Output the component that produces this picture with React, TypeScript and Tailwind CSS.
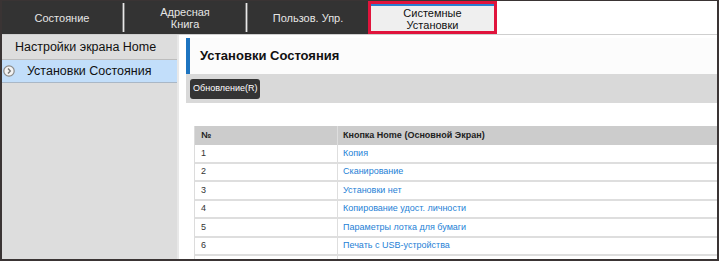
const rows = [
  { n: "1", label: "Копия" },
  { n: "2", label: "Сканирование" },
  { n: "3", label: "Установки нет" },
  { n: "4", label: "Копирование удост. личности" },
  { n: "5", label: "Параметры лотка для бумаги" },
  { n: "6", label: "Печать с USB-устройства" },
  { n: "", label: "" },
];

function Tab({ label }: { label: string }) {
  return (
    <div className="flex w-[120px] items-center justify-center whitespace-pre text-center text-[11px] leading-[12px] text-[#e6e6e6]">
      {label}
    </div>
  );
}

function Sep() {
  return <div className="my-[2px] w-[3px] border-x border-[#777] bg-[#e8e8e8]" />;
}

export default function App() {
  return (
    <div className="flex h-[261px] w-[719px] flex-col overflow-hidden border-x-2 border-b-2 border-t border-[#3a3434] bg-white font-['Liberation_Sans',Arial,sans-serif]">
      {/* Tabs */}
      <div className="flex h-[34px] shrink-0 border-b border-[#cfcfcf]">
        <div className="flex bg-[#333333]">
          <Tab label="Состояние" />
          <Sep />
          <Tab label={"Адресная\nКнига"} />
          <Sep />
          <Tab label="Пользов. Упр." />
        </div>
        <div className="flex w-[129px] flex-col border-[3px] border-[#e0143c] bg-[#efefef]">
          <div className="h-[2px] bg-[#2a7fd0]" />
          <div className="flex flex-1 items-center justify-center text-center text-[11px] leading-[12px] text-[#111]">
            Системные
            <br />
            Установки
          </div>
        </div>
        <div className="flex-1" />
      </div>

      <div className="flex min-h-0 flex-1">
        {/* Sidebar */}
        <div className="w-[177px] shrink-0 border-r-2 border-[#e8e8e8] bg-[#dddddd]">
          <div className="flex h-[25px] items-center border-b border-[#bdbdbd] pl-[13px] text-[12.5px] text-[#111]">
            Настройки экрана Home
          </div>
          <div className="flex h-[23px] items-center border-b border-[#a9b7c6] bg-[#c2defa] text-[12.5px] text-[#111]">
            <svg width="12" height="12" viewBox="0 0 12 12" className="ml-[1px] mr-[12px]">
              <circle cx="6" cy="6" r="5.2" fill="#f4f4f4" stroke="#8a8a8a" strokeWidth="1.2" />
              <path d="M5 3.6 L7.3 6 L5 8.4" fill="none" stroke="#777" strokeWidth="1.4" />
            </svg>
            Установки Состояния
          </div>
        </div>

        {/* Main */}
        <div className="flex min-w-0 flex-1 flex-col pl-[7px]">
          <div className="mt-[3px] flex h-[36px] shrink-0 items-center border-l-4 border-[#1d74c0] bg-[#fcfcfc] pl-[10px] text-[13px] font-bold text-[#111]">
            Установки Состояния
          </div>
          <div className="flex h-[29px] shrink-0 items-center bg-[#d9d9d9] pl-[4px]">
            <div className="flex h-[20px] items-center rounded-[3px] bg-[#343434] px-[3px] text-[9px] text-white">
              Обновление(R)
            </div>
          </div>

          <div className="ml-[8px] mt-[23px] shrink-0 border-l border-[#dcdcdc]">
            <div className="flex h-[19px] items-center bg-[#cccccc] text-[9px] font-bold text-[#222]">
              <div className="w-[142px] pl-[6px]">№</div>
              <div className="flex h-full items-center border-l border-[#dedede] pl-[5px]">
                Кнопка Home (Основной Экран)
              </div>
            </div>
            {rows.map((r, i) => (
              <div
                key={i}
                className="flex h-[18.5px] items-center border-b-2 border-[#dedede] text-[9px]"
              >
                <div className="w-[142px] pl-[6px] text-[#333]">{r.n}</div>
                <div className="flex h-full items-center border-l border-[#dedede] pl-[5px] text-[#1e7fd6]">
                  {r.label}
                </div>
              </div>
            ))}
          </div>
        </div>
      </div>
    </div>
  );
}
